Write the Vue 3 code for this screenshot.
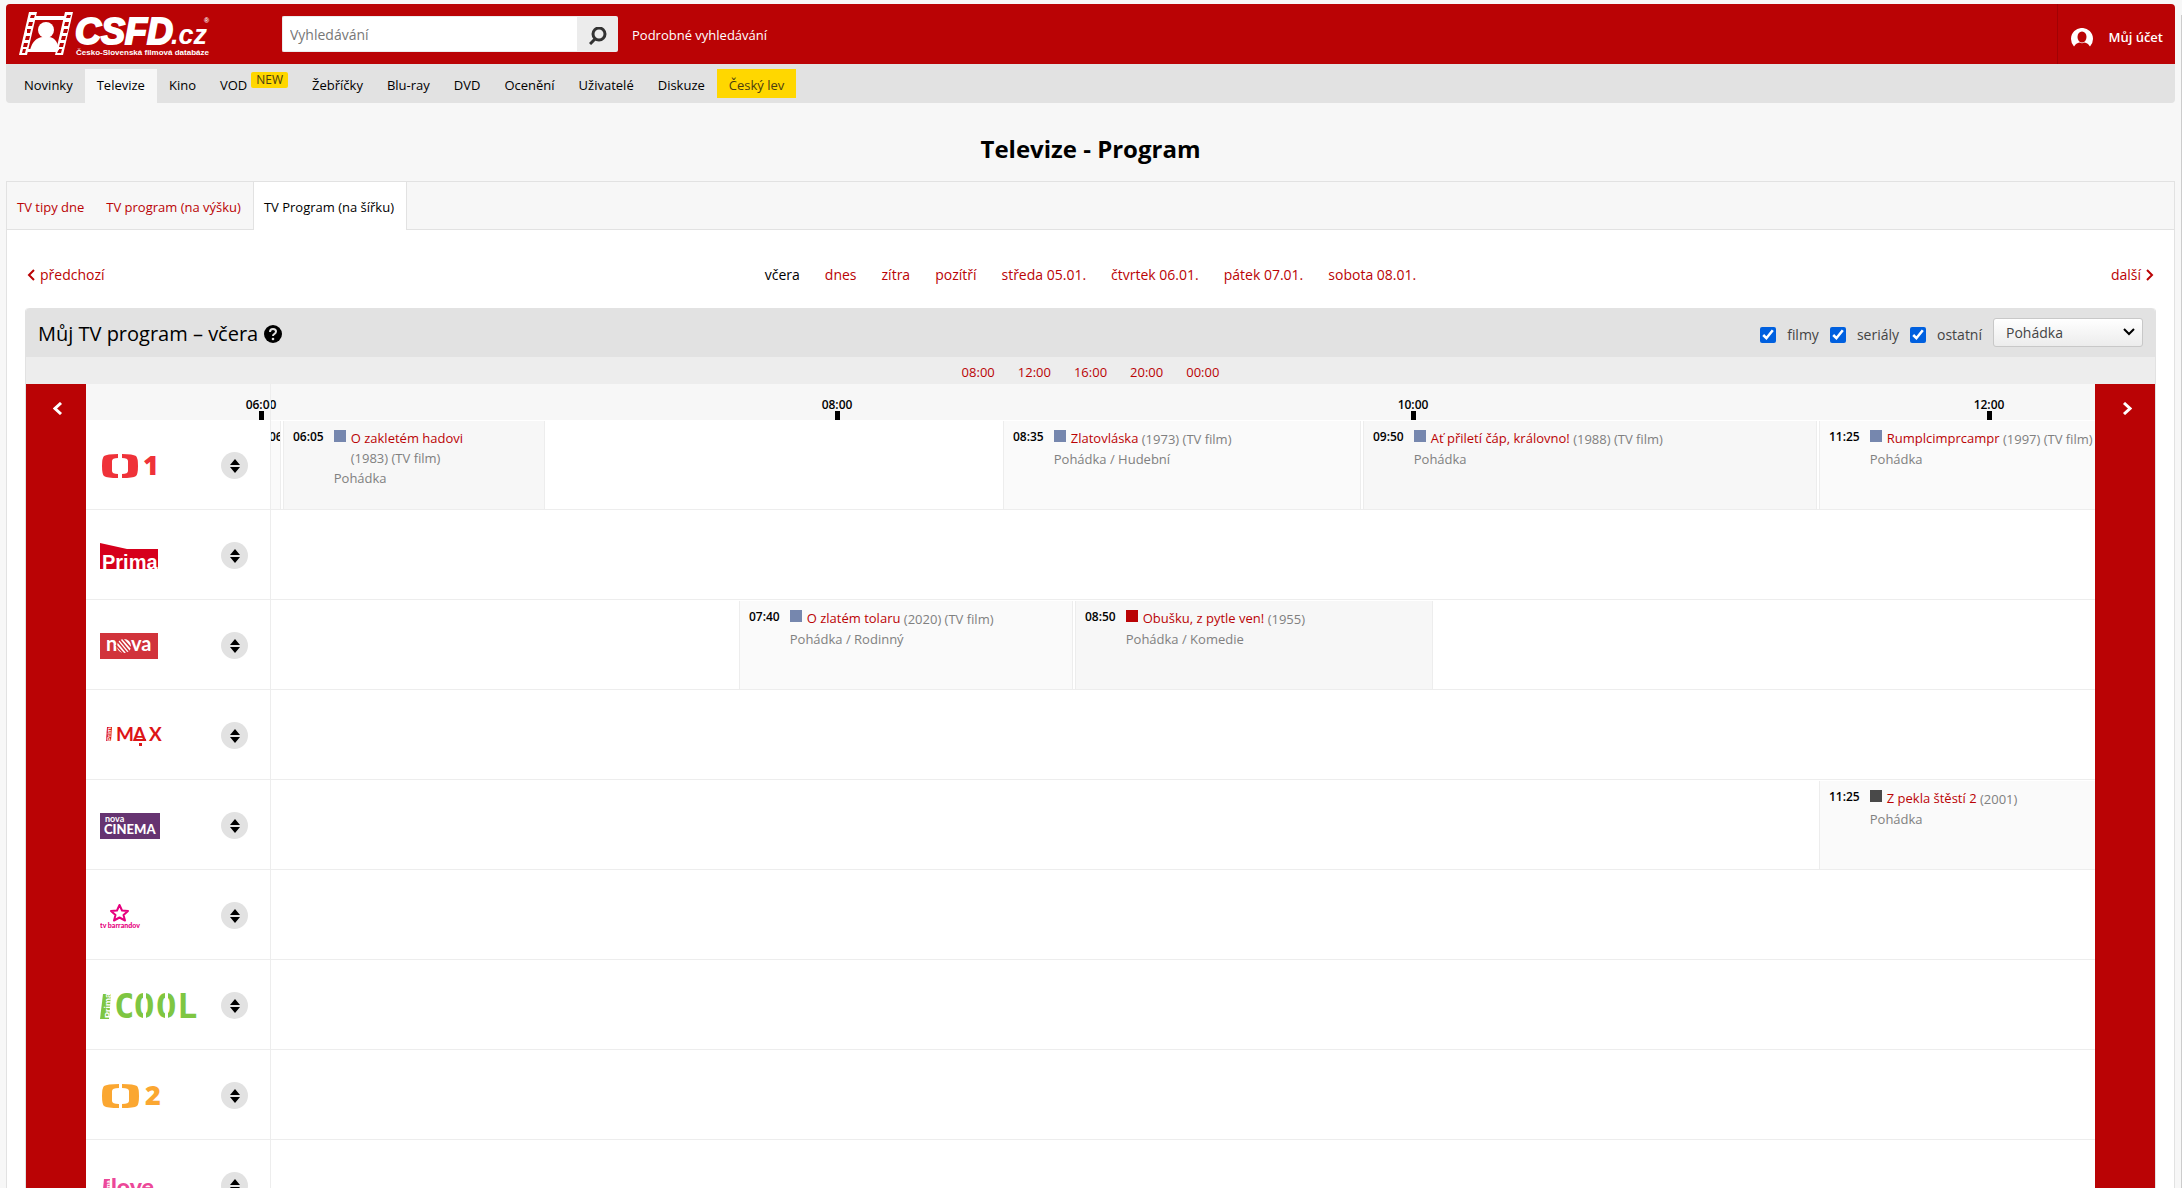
<script setup>
import { ref } from 'vue';

const search = ref('');
const genre = ref('Pohádka');

const menu = [
  { label: 'Novinky' },
  { label: 'Televize', active: true },
  { label: 'Kino' },
  { label: 'VOD', badge: 'NEW' },
  { label: 'Žebříčky' },
  { label: 'Blu-ray' },
  { label: 'DVD' },
  { label: 'Ocenění' },
  { label: 'Uživatelé' },
  { label: 'Diskuze' },
  { label: 'Český lev', highlight: true },
];

const tabs = ['TV tipy dne', 'TV program (na výšku)', 'TV Program (na šířku)'];
const activeTab = ref(2);

const days = ['včera', 'dnes', 'zítra', 'pozítří', 'středa 05.01.', 'čtvrtek 06.01.', 'pátek 07.01.', 'sobota 08.01.'];
const hours = ['08:00', '12:00', '16:00', '20:00', '00:00'];
const scale = ['06:00', '08:00', '10:00', '12:00'];

const filters = ref([
  { id: 'filmy', label: 'filmy', checked: true },
  { id: 'serialy', label: 'seriály', checked: true },
  { id: 'ostatni', label: 'ostatní', checked: true },
]);

const channels = [
  {
    id: 'ct1',
    name: 'ČT1',
    width: 62,
    shows: [
      { from: '06:00', to: '06:05' },
      { from: '06:05', to: '07:00', title: 'O zakletém hadovi', info: '(1983) (TV film)', genre: 'Pohádka', rating: 'blue', dark: true },
      { from: '08:35', to: '09:50', title: 'Zlatovláska', info: '(1973) (TV film)', genre: 'Pohádka / Hudební', rating: 'blue' },
      { from: '09:50', to: '11:25', title: 'Ať přiletí čáp, královno!', info: '(1988) (TV film)', genre: 'Pohádka', rating: 'blue', dark: true },
      { from: '11:25', to: '12:35', title: 'Rumplcimprcampr', info: '(1997) (TV film)', genre: 'Pohádka', rating: 'blue' },
    ],
  },
  { id: 'prima', name: 'Prima', width: 58, shows: [] },
  {
    id: 'nova',
    name: 'Nova',
    width: 58,
    shows: [
      { from: '07:40', to: '08:50', title: 'O zlatém tolaru', info: '(2020) (TV film)', genre: 'Pohádka / Rodinný', rating: 'blue' },
      { from: '08:50', to: '10:05', title: 'Obušku, z pytle ven!', info: '(1955)', genre: 'Pohádka / Komedie', rating: 'red', dark: true },
    ],
  },
  { id: 'max', name: 'Prima Max', width: 68, shows: [] },
  {
    id: 'cinema',
    name: 'Nova Cinema',
    width: 60,
    shows: [
      { from: '11:25', to: '13:10', title: 'Z pekla štěstí 2', info: '(2001)', genre: 'Pohádka', rating: 'gray' },
    ],
  },
  { id: 'barrandov', name: 'TV Barrandov', width: 58, shows: [] },
  { id: 'cool', name: 'Prima Cool', width: 100, shows: [] },
  { id: 'ct2', name: 'ČT2', width: 64, shows: [] },
  { id: 'love', name: 'Prima Love', width: 60, shows: [] },
];

// one grid column is five minutes, the first one starts at 06:00
const column = (time) => {
  const [h, m] = time.split(':').map(Number);
  return ((h - 6) * 60 + m) / 5 + 1;
};

const placement = (show) => ({ gridColumn: `${column(show.from)} / ${column(show.to)}` });
</script>

<template>
  <div class="page">
    <header class="header">
      <a href="#" class="logo" aria-label="ČSFD.cz">
        <svg width="194" height="48" viewBox="0 0 194 48">
          <g transform="translate(1 2)">
            <path fill="#fff" d="M10 0h8L8 43H0zM46 0h8L44 43h-8z" />
            <path fill="#fff" d="M16 4h32l-1 4H15zM9 37h30l-1 3H8z" />
            <g fill="#ba0305">
              <path d="M12 3h4l-1 3h-4zM10 10h4l-1 4H9zM8 17h4l-1 4H8zM7 24h4l-1 4H6zM5 31h4l-1 4H4zM4 37h3l-1 4H3z" />
              <path d="M48 3h4l-1 3h-4zM46 10h4l-1 4h-4zM45 17h4l-1 4h-4zM43 24h4l-1 4h-4zM41 31h4l-1 4h-4zM40 37h3l-1 4h-4z" />
            </g>
            <circle cx="27" cy="18" r="8" fill="#fff" />
            <path fill="#fff" d="M11 38c2-8 7-13 13-13h6c5 0 9 5 10 13z" />
          </g>
          <text x="57" y="34" class="logo-name">CSFD</text>
          <text x="153" y="34" class="logo-domain">.cz</text>
          <text x="186" y="13" class="logo-mark">®</text>
          <text x="58" y="45" class="logo-claim">Česko-Slovenská filmová databáze</text>
        </svg>
      </a>
      <form class="search" role="search" @submit.prevent>
        <input v-model="search" type="text" class="search-input" placeholder="Vyhledávání" aria-label="Vyhledávání" />
        <button type="submit" class="search-btn" aria-label="Hledat">
          <svg width="18" height="18" viewBox="0 0 18 18" fill="none" stroke="#333">
            <circle cx="10" cy="7" r="6" stroke-width="3" />
            <path d="M6 12l-5 5" stroke-width="3" />
          </svg>
        </button>
      </form>
      <a href="#" class="advanced">Podrobné vyhledávání</a>
      <a href="#" class="account">
        <svg width="22" height="19" viewBox="0 0 22 19">
          <path fill="#fff" d="M3 18.500A11 11 0 1 1 19 18.500L17 16Q15 14.500 13.500 14.500Q11 16 8.500 14.500Q7 14.500 5 16z" />
          <ellipse cx="11" cy="9" rx="4.500" ry="5.500" fill="#ba0305" />
        </svg>
        Můj účet
      </a>
    </header>

    <nav class="menu">
      <a
        v-for="item in menu"
        :key="item.label"
        href="#"
        class="menu-item"
        :class="{ active: item.active, highlight: item.highlight }"
      >{{ item.label }}<span v-if="item.badge" class="badge">{{ item.badge }}</span></a>
    </nav>

    <h1 class="title">Televize - Program</h1>

    <main class="content">
      <nav class="tabs">
        <a
          v-for="(tab, index) in tabs"
          :key="tab"
          href="#"
          class="tab"
          :class="{ active: index === activeTab }"
          @click.prevent="activeTab = index"
        >{{ tab }}</a>
      </nav>

      <nav class="days">
        <a href="#" class="day-step">
          <svg width="8" height="12" viewBox="0 0 8 12"><path d="M7 1L2 6l5 5" /></svg>
          předchozí
        </a>
        <div class="day-list">
          <a v-for="(day, index) in days" :key="day" href="#" :class="{ current: index === 0 }">{{ day }}</a>
        </div>
        <a href="#" class="day-step next">
          další
          <svg width="8" height="12" viewBox="0 0 8 12"><path d="M1 1l5 5-5 5" /></svg>
        </a>
      </nav>

      <section class="guide">
        <header class="guide-header">
          <h2>Můj TV program – včera</h2>
          <svg class="help" width="18" height="18" viewBox="0 0 18 18">
            <circle cx="9" cy="9" r="9" />
            <path d="M6 7q0-3 3-3t3 2.500q0 1.500-1.500 2.300T9 11" fill="none" stroke="#e2e2e2" stroke-width="2" />
            <circle cx="9" cy="14" r="1.300" fill="#e2e2e2" />
          </svg>
          <div class="filters">
            <label v-for="filter in filters" :key="filter.id" class="filter">
              <input v-model="filter.checked" type="checkbox" />
              {{ filter.label }}
            </label>
            <div class="genre">
              <select v-model="genre" aria-label="Žánr">
                <option>Pohádka</option>
                <option>Komedie</option>
                <option>Rodinný</option>
              </select>
              <svg width="12" height="8" viewBox="0 0 12 8"><path d="M1 1l5 5 5-5" /></svg>
            </div>
          </div>
        </header>

        <nav class="hours">
          <a v-for="hour in hours" :key="hour" href="#">{{ hour }}</a>
        </nav>

        <div class="board">
          <button type="button" class="shift" aria-label="Dříve">
            <svg width="10" height="13" viewBox="0 0 10 13"><path d="M8 1L2 6.500 8 12" /></svg>
          </button>
          <div class="schedule">
            <div class="scale">
              <span v-for="time in scale" :key="time" class="scale-time">{{ time }}</span>
            </div>
            <div v-for="channel in channels" :key="channel.id" class="channel">
              <div class="channel-head">
                <svg :width="channel.width" height="26" role="img" :aria-label="channel.name">
                  <g v-if="channel.id === 'ct1'" fill="#ef3239">
                    <path d="M18 1v4q-6 0-6 3v10q0 3 6 3v4q-11 0-14-2-2-2-2-10t2-10q3-2 14-2zM22 1v4q6 0 6 3v10q0 3-6 3v4q11 0 14-2 2-2 2-10t-2-10q-3-2-14-2z" />
                    <text x="43" y="22" class="logo-number">1</text>
                  </g>
                  <g v-else-if="channel.id === 'prima'">
                    <path d="M0 0l27 6h31v20H0z" fill="#d6001c" />
                    <text x="2" y="26" class="logo-prima">Prima</text>
                  </g>
                  <g v-else-if="channel.id === 'nova'">
                    <path d="M0 0h58v26H0z" fill="#d1333b" />
                    <text x="6" y="18" class="logo-nova">n</text>
                    <text x="31" y="18" class="logo-nova">va</text>
                    <circle cx="24" cy="13" r="7" fill="#fff" />
                    <path d="M16 12l8 9M18 9l9 11M20 7l9 11M23 6l8 9" stroke="#d1333b" stroke-width="1.500" />
                  </g>
                  <g v-else-if="channel.id === 'max'" fill="#dd1417">
                    <path d="M7 4h5l-1 14H6z" />
                    <text x="-18" y="11" transform="rotate(-90)" class="logo-side small">Prima</text>
                    <text x="16" y="18" class="logo-max">M</text>
                    <text x="33" y="18" class="logo-max">A</text>
                    <text x="49" y="18" class="logo-max">X</text>
                    <path d="M34 16h12v2H34z" />
                    <path d="M39 20h3v3h-3z" />
                  </g>
                  <g v-else-if="channel.id === 'cinema'">
                    <path d="M0 0h60v26H0z" fill="#663471" />
                    <text x="5" y="9" class="logo-cinema-top">nova</text>
                    <text x="4" y="21" class="logo-cinema">CINEMA</text>
                  </g>
                  <g v-else-if="channel.id === 'barrandov'" fill="#e6007e">
                    <path d="M19.500 2l2.500 5.500 6 .5-4.500 4 1.500 5.500-5.500-3-5.500 3 1.500-5.500-4.500-4 6-.5z" fill="none" stroke="#e6007e" stroke-width="2" stroke-linejoin="round" />
                    <text x="0" y="25" class="logo-barrandov">tv barrandov</text>
                  </g>
                  <g v-else-if="channel.id === 'cool'" fill="#7ec642">
                    <path d="M3 1h8L9 26H0z" />
                    <text x="-25" y="11" transform="rotate(-90)" class="logo-side">Prima</text>
                    <text x="14" y="25" class="logo-cool">C</text>
                    <text x="34" y="25" class="logo-cool">O</text>
                    <text x="56" y="25" class="logo-cool">O</text>
                    <text x="77" y="25" class="logo-cool">L</text>
                    <path d="M43 0h3v26h-3zM65 0h3v26h-3z" fill="#fff" />
                  </g>
                  <g v-else-if="channel.id === 'ct2'" fill="#fba731">
                    <path d="M19 1v4q-7 0-7 3v10q0 3 7 3v4q-12 0-15-2-2-2-2-10t2-10q3-2 15-2zM22 1v4q7 0 7 3v10q0 3-7 3v4q12 0 15-2 2-2 2-10t-2-10q-3-2-15-2z" />
                    <text x="45" y="22" class="logo-number">2</text>
                  </g>
                  <g v-else fill="#ec4899">
                    <path d="M4 6h6l-1 20H2z" />
                    <text x="-24" y="10" transform="rotate(-90)" class="logo-side small">Prima</text>
                    <text x="11" y="22" class="logo-love">love</text>
                  </g>
                </svg>
                <button type="button" class="move" aria-label="Přesunout stanici">
                  <svg width="10" height="14" viewBox="0 0 10 14"><path d="M5 0l5 6H0zM0 8h10l-5 6z" /></svg>
                </button>
              </div>
              <div class="lane">
                <div class="lane-grid">
                  <article
                    v-for="show in channel.shows"
                    :key="show.from"
                    class="show"
                    :class="{ dark: show.dark }"
                    :style="placement(show)"
                  >
                    <time>{{ show.from }}</time>
                    <div v-if="show.title" class="show-body">
                      <div class="show-heading">
                        <span class="rating" :class="show.rating"></span>
                        <h3><a href="#">{{ show.title }}</a>{{ ' ' }}<span class="info">{{ show.info }}</span></h3>
                      </div>
                      <p>{{ show.genre }}</p>
                    </div>
                  </article>
                </div>
              </div>
            </div>
          </div>
          <button type="button" class="shift" aria-label="Později">
            <svg width="10" height="13" viewBox="0 0 10 13"><path d="M2 1l6 5.500L2 12" /></svg>
          </button>
        </div>
      </section>
    </main>
  </div>
</template>

<style>
body {
  height: 100vh;
  overflow: hidden;
  background: #f7f7f7;
}
</style>

<style scoped>
.page {
  padding: 4px 7px 0 6px;
  font-family: 'Open Sans', 'Noto Sans', sans-serif;
  font-size: 13px;
  line-height: 20px;
  color: #000;
}

.page::after {
  content: '';
  position: fixed;
  top: 15px;
  right: 0;
  bottom: 0;
  width: 1px;
  background: #ccc;
}

.page *,
.page *::before {
  box-sizing: border-box;
}

a {
  color: #ba0305;
  text-decoration: none;
}

button,
input,
select {
  font: inherit;
  margin: 0;
}

button {
  border: 0;
  padding: 0;
  cursor: pointer;
}

/* Hlavička */
.header {
  display: flex;
  align-items: center;
  height: 60px;
  padding-left: 12px;
  background: #ba0305;
  border-radius: 4px 4px 0 0;
}

.logo {
  display: flex;
  margin-right: 70px;
}

.logo text {
  fill: #fff;
  font-family: 'Liberation Sans', sans-serif;
  font-weight: 700;
}

.logo .logo-name {
  font-size: 36px;
  font-style: italic;
  stroke: #fff;
  stroke-width: 2;
}

.logo .logo-domain {
  font-size: 27px;
  font-style: italic;
}

.logo .logo-mark {
  font-size: 7px;
}

.logo .logo-claim {
  font-size: 8px;
}

.search {
  display: flex;
  height: 36px;
}

.search-input {
  width: 295px;
  padding: 2px 7px 0;
  font-size: 14px;
  border: 1px solid #ececec;
  border-right: 0;
  border-radius: 2px 0 0 2px;
  background: #fff;
}

.search-input::placeholder {
  color: #777;
  opacity: 1;
}

.search-btn {
  display: flex;
  align-items: center;
  justify-content: center;
  width: 41px;
  padding-top: 4px;
  background: #ececec;
  border-radius: 0 2px 2px 0;
}

.advanced {
  margin-left: 14px;
  padding-top: 2px;
  color: #fff;
}

.account {
  display: flex;
  align-items: center;
  gap: 15px;
  height: 60px;
  margin-left: auto;
  padding: 6px 12px 0 13px;
  border-left: 1px solid #a00204;
  color: #fff;
  font-weight: 600;
}

/* Hlavní menu */
.menu {
  display: flex;
  height: 39px;
  padding: 5px 6px 0;
  background: #e2e2e2;
  border-radius: 0 0 4px 4px;
}

.menu-item {
  height: 29px;
  padding: 0 12px;
  line-height: 32px;
  color: #000;
}

.menu-item.active {
  height: 34px;
  background: #f7f7f7;
}

.menu-item.highlight {
  background: #ffd700;
  color: #4a3c10;
}

.badge {
  display: inline-block;
  margin-left: 4px;
  padding: 0 5px;
  line-height: 16px;
  vertical-align: 6px;
  font-size: 12px;
  color: #4a3c10;
  background: #ffd700;
  border-radius: 2px;
}

.title {
  margin: 0;
  padding: 30px 0 16px;
  font-size: 24px;
  line-height: 32px;
  text-align: center;
}

/* Obsah */
.content {
  border: 1px solid #e2e2e2;
  background: #fff;
}

.tabs {
  display: flex;
  height: 48px;
  background: #f7f7f7;
  border-bottom: 1px solid #e2e2e2;
}

.tab {
  height: 48px;
  padding: 0 12px 0 10px;
  line-height: 50px;
}

.tab.active {
  border: 1px solid #e2e2e2;
  border-width: 0 1px;
  background: #fff;
  color: #000;
}

.days {
  display: grid;
  grid-template-columns: 1fr auto 1fr;
  padding: 35px 20px 23px;
  font-size: 14px;
}

.day-list {
  display: flex;
  gap: 25px;
}

.day-list .current {
  color: #000;
}

.day-step {
  display: flex;
  align-items: center;
  gap: 5px;
}

.day-step.next {
  justify-content: flex-end;
}

.day-step path {
  fill: none;
  stroke: #ba0305;
  stroke-width: 2;
}

/* TV program */
.guide {
  margin: 0 18px;
  border: 1px solid #e2e2e2;
  border-top: 0;
  border-radius: 4px 4px 0 0;
}

.guide-header {
  display: flex;
  align-items: center;
  height: 49px;
  padding: 2px 12px 0;
  background: #e2e2e2;
  border-radius: 4px 4px 0 0;
}

.guide-header h2 {
  margin: 0 6px 0 0;
  font-size: 20px;
  line-height: 26px;
  font-weight: 500;
}

.filters {
  display: flex;
  align-items: center;
  gap: 11px;
  margin-left: auto;
  font-size: 14px;
  color: #444;
}

.filter {
  display: flex;
  align-items: center;
  gap: 11px;
  padding-top: 2px;
}

.filter input {
  width: 16px;
  height: 16px;
  accent-color: #0060df;
}

.genre {
  position: relative;
  height: 31px;
}

.genre select {
  width: 150px;
  height: 29px;
  padding: 0 12px;
  appearance: none;
  border: 1px solid #c8c8c8;
  border-radius: 3px;
  background: linear-gradient(#fff, #ececec);
  color: #444;
}

.genre svg {
  position: absolute;
  top: 10px;
  right: 8px;
  fill: none;
  stroke: #000;
  stroke-width: 2;
  pointer-events: none;
}

.hours {
  display: flex;
  justify-content: center;
  gap: 23px;
  height: 27px;
  line-height: 30px;
  background: #ededed;
}

.board {
  display: grid;
  grid-template-columns: 60px minmax(0, 1fr) 60px;
}

.shift {
  display: flex;
  align-items: flex-start;
  justify-content: center;
  padding: 18px 0 0 3px;
  background: #ba0305;
}

.shift path {
  fill: none;
  stroke: #fff;
  stroke-width: 3;
}

.schedule {
  position: relative;
  overflow: hidden;
}

.schedule::before {
  content: '';
  position: absolute;
  top: 0;
  bottom: 0;
  left: 184px;
  width: 1px;
  background: #ededed;
}

.scale {
  display: flex;
  height: 36px;
  padding-top: 14px;
  background: #f7f7f7;
}

.scale-time {
  flex: 0 0 576px;
  font-size: 12px;
  font-weight: 600;
  line-height: 13px;
  text-align: center;
}

.scale-time:first-child {
  margin-left: -113px;
}

.scale-time::after {
  content: '';
  display: block;
  width: 5px;
  height: 9px;
  margin: 0 auto;
  background: #000;
}

.channel {
  display: flex;
  height: 90px;
  border-bottom: 1px solid #ededed;
}

.channel-head {
  display: flex;
  align-items: center;
  justify-content: space-between;
  flex: 0 0 185px;
  padding: 2px 23px 0 14px;
}

.move {
  display: flex;
  align-items: center;
  justify-content: center;
  width: 27px;
  height: 27px;
  border-radius: 50%;
  background: #e2e2e2;
}

.lane {
  display: flex;
  flex: 1;
  min-width: 0;
  padding-top: 1px;
  overflow: hidden;
}

/* Okno začíná pár minut po šesté, proto záporný okraj */
.lane-grid {
  display: grid;
  grid-template-columns: repeat(90, 24px);
  margin-left: -12px;
}

.show {
  display: flex;
  gap: 10px;
  margin-right: 2px;
  padding: 6px 4px 0 9px;
  overflow: hidden;
  border: 1px solid #ededed;
  border-width: 0 1px;
  background: #fafafa;
}

.show.dark {
  background: #f7f7f7;
}

.show time {
  flex: none;
  font-size: 12px;
  font-weight: 600;
}

.show-body {
  min-width: 0;
  color: #808080;
}

.show-heading {
  display: flex;
  gap: 5px;
}

.show-heading h3 {
  margin: 0;
  padding-top: 2px;
  font-size: 13px;
  font-weight: 400;
  line-height: 19px;
}

.info {
  display: inline-block;
  vertical-align: -1px;
}

.show-body p {
  margin: 0;
}

.rating {
  flex: none;
  width: 12px;
  height: 12px;
  margin-top: 3px;
}

.rating.blue {
  background: #7687ae;
}

.rating.red {
  background: #ba0305;
}

.rating.gray {
  background: #494949;
}

/* Loga stanic */
.logo-number {
  font-family: 'Open Sans', sans-serif;
  font-size: 27px;
  font-weight: 800;
}

.logo-prima {
  font-family: 'Liberation Sans', sans-serif;
  font-size: 20px;
  font-weight: 700;
  fill: #fff;
}

.logo-nova {
  font-family: Lato, sans-serif;
  font-size: 20px;
  font-weight: 700;
  fill: #fff;
}

.logo-side {
  font-family: 'Liberation Sans', sans-serif;
  font-size: 9px;
  font-weight: 700;
  fill: #fff;
}

.logo-side.small {
  font-size: 6px;
}

.logo-max {
  font-family: Lato, sans-serif;
  font-size: 19px;
  font-weight: 700;
}

.logo-cinema {
  font-family: Lato, sans-serif;
  font-size: 13px;
  font-weight: 900;
  fill: #fff;
}

.logo-cinema-top {
  font-family: Lato, sans-serif;
  font-size: 9px;
  font-weight: 700;
  fill: #fff;
}

.logo-barrandov {
  font-family: Lato, sans-serif;
  font-size: 7px;
  font-weight: 900;
}

.logo-cool {
  font-family: 'DejaVu Sans Mono', monospace;
  font-size: 34px;
  font-weight: 700;
}

.logo-love {
  font-family: Lato, sans-serif;
  font-size: 23px;
  font-weight: 900;
}
</style>
